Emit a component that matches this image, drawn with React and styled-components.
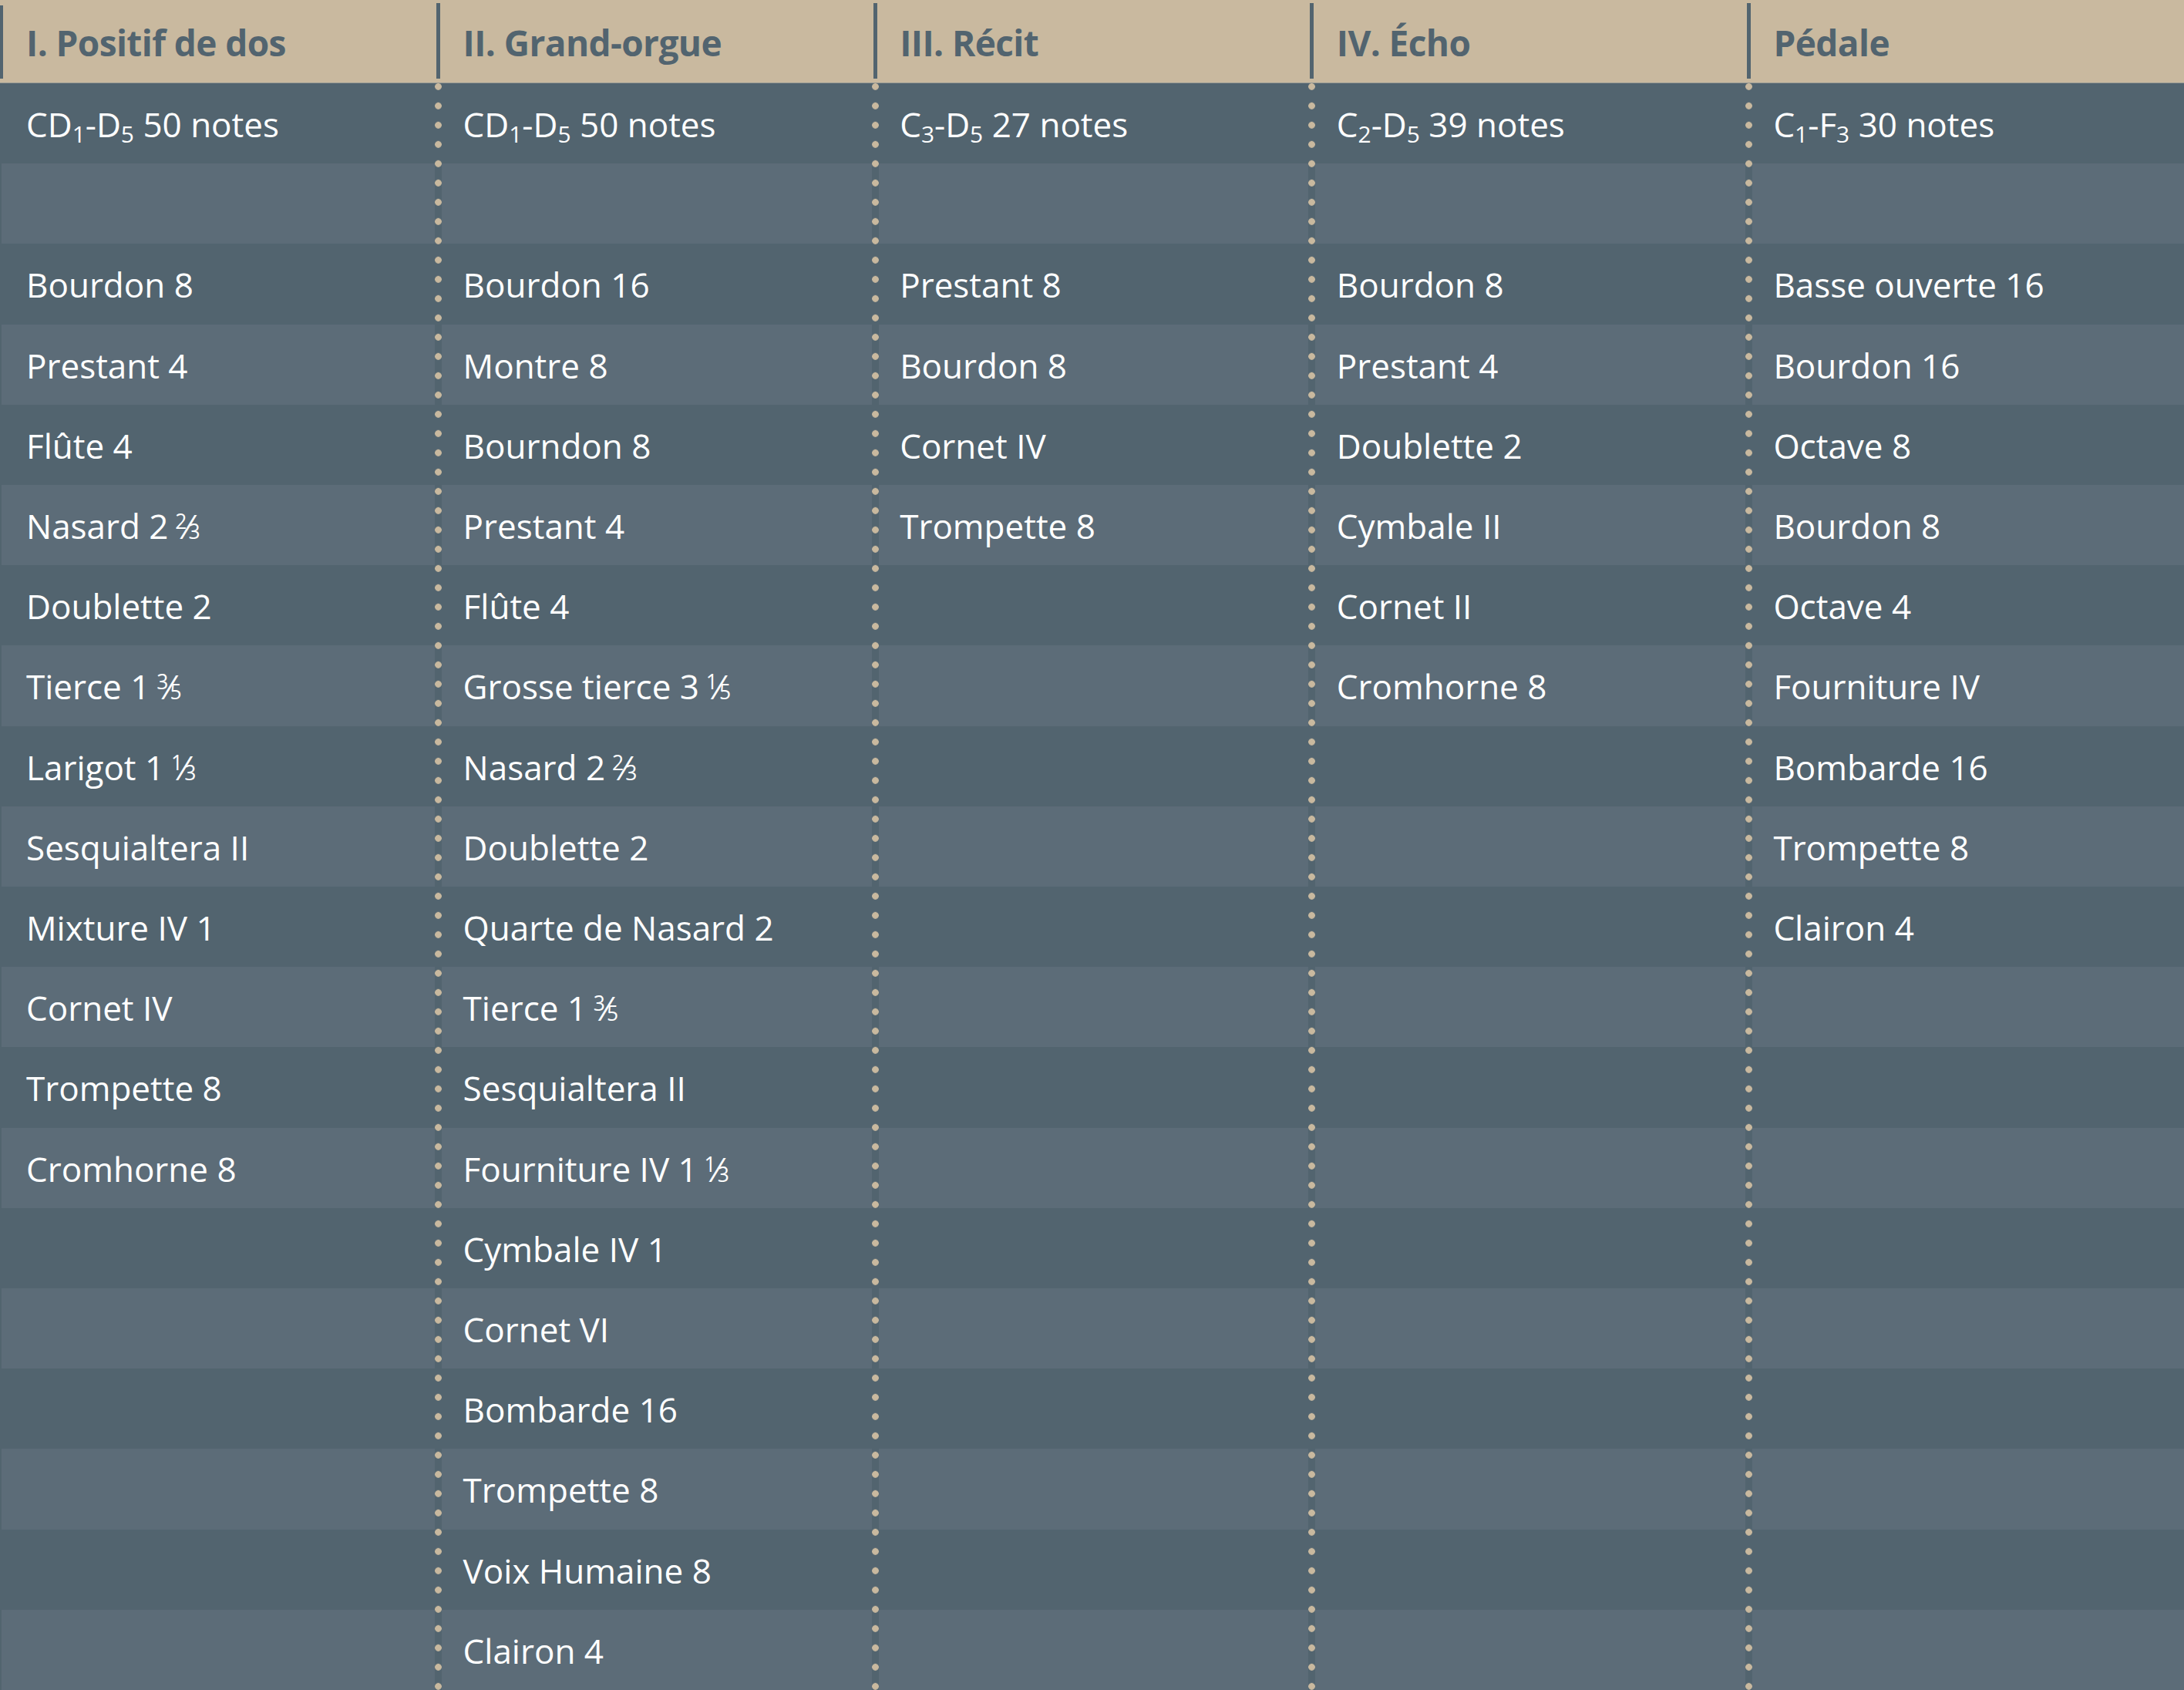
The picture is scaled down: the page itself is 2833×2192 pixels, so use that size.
import React from 'react';
import styled, { createGlobalStyle, css } from 'styled-components';

const GlobalStyle = createGlobalStyle`
  html, body {
    margin: 0;
    padding: 0;
    background: #52646f;
  }
  body {
    font-family: "Open Sans", "Noto Sans", "DejaVu Sans", sans-serif;
  }
`;

const TAN = '#c9b99f';
const DARK = '#52646f';
const LIGHT = '#5c6c78';

const Table = styled.div`
  display: grid;
  grid-template-columns: repeat(5, 1fr);
  height: 100vh;
  background: ${DARK};
  overflow: hidden;
`;

const Column = styled.div`
  position: relative;
  display: grid;
  grid-template-rows: 108px repeat(20, 1fr);
  min-width: 0;

  &::after {
    content: '';
    position: absolute;
    top: 108px;
    bottom: 0;
    z-index: 1;
    background-color: ${DARK};
    ${(p) =>
      p.$first
        ? css`
            left: 0;
            width: 2px;
          `
        : css`
            left: -2.5px;
            width: 9px;
            background-image: radial-gradient(circle at center, ${TAN} 4px, rgba(201, 185, 159, 0) 4.7px);
            background-size: 9px 25px;
            background-repeat: repeat-y;
            background-position: 0 -8.2px;
          `}
  }
`;

const HeaderCell = styled.div`
  position: relative;
  box-sizing: border-box;
  display: flex;
  align-items: center;
  padding-left: 34px;
  background: ${TAN};
  border-bottom: 1px solid #9a9c96;
  color: ${DARK};
  font-size: 46px;
  font-weight: 700;
  letter-spacing: -0.6px;
  line-height: 1;
  white-space: nowrap;

  &::before {
    content: '';
    position: absolute;
    background: ${DARK};
    ${(p) =>
      p.$first
        ? css`
            left: 0;
            width: 4px;
            top: 7px;
            bottom: 5px;
          `
        : css`
            left: -0.5px;
            width: 5px;
            top: 4px;
            bottom: 5px;
          `}
  }
`;

const HeaderLabel = styled.span`
  display: block;
  padding-top: 2px;
`;

const Cell = styled.div`
  display: flex;
  align-items: center;
  padding-left: 34px;
  background: ${(p) => (p.$alt ? LIGHT : DARK)};
  color: #ffffff;
  font-size: 44px;
  font-weight: 400;
  line-height: 1;
  white-space: nowrap;
  min-width: 0;
`;

const Label = styled.span`
  display: block;
  line-height: 1;
  padding-top: 2px;
`;

const Sub = styled.span`
  font-size: 0.68em;
  vertical-align: -0.24em;
  line-height: 0;
`;

const Frac = styled.span`
  margin-left: 0.2em;
`;

const Num = styled.span`
  font-size: 0.6em;
  vertical-align: 0.5em;
`;

const Slash = styled.span`
  margin: 0 -0.06em 0 -0.02em;
`;

const Den = styled.span`
  font-size: 0.6em;
`;

const columns = [
  {
    title: 'I. Positif de dos',
    range: 'CD_1-D_5 50 notes',
    stops: [
      'Bourdon 8',
      'Prestant 4',
      'Flûte 4',
      'Nasard 2 2/3',
      'Doublette 2',
      'Tierce 1 3/5',
      'Larigot 1 1/3',
      'Sesquialtera II',
      'Mixture IV 1',
      'Cornet IV',
      'Trompette 8',
      'Cromhorne 8',
    ],
  },
  {
    title: 'II. Grand-orgue',
    range: 'CD_1-D_5 50 notes',
    stops: [
      'Bourdon 16',
      'Montre 8',
      'Bourndon 8',
      'Prestant 4',
      'Flûte 4',
      'Grosse tierce 3 1/5',
      'Nasard 2 2/3',
      'Doublette 2',
      'Quarte de Nasard 2',
      'Tierce 1 3/5',
      'Sesquialtera II',
      'Fourniture IV 1 1/3',
      'Cymbale IV 1',
      'Cornet VI',
      'Bombarde 16',
      'Trompette 8',
      'Voix Humaine 8',
      'Clairon 4',
    ],
  },
  {
    title: 'III. Récit',
    range: 'C_3-D_5 27 notes',
    stops: ['Prestant 8', 'Bourdon 8', 'Cornet IV', 'Trompette 8'],
  },
  {
    title: 'IV. Écho',
    range: 'C_2-D_5 39 notes',
    stops: ['Bourdon 8', 'Prestant 4', 'Doublette 2', 'Cymbale II', 'Cornet II', 'Cromhorne 8'],
  },
  {
    title: 'Pédale',
    range: 'C_1-F_3 30 notes',
    stops: [
      'Basse ouverte 16',
      'Bourdon 16',
      'Octave 8',
      'Bourdon 8',
      'Octave 4',
      'Fourniture IV',
      'Bombarde 16',
      'Trompette 8',
      'Clairon 4',
    ],
  },
];

const ROWS = 20;

function Range({ text }) {
  const parts = text.split(/_(\d)/);
  return (
    <Label>
      {parts.map((part, i) => (i % 2 === 1 ? <Sub key={i}>{part}</Sub> : <React.Fragment key={i}>{part}</React.Fragment>))}
    </Label>
  );
}

function Stop({ text }) {
  const m = text.match(/^(.*?) (\d)\/(\d)$/);
  if (!m) return <Label>{text}</Label>;
  return (
    <Label>
      {m[1]}
      <Frac>
        <Num>{m[2]}</Num>
        <Slash>⁄</Slash>
        <Den>{m[3]}</Den>
      </Frac>
    </Label>
  );
}

export default function App() {
  return (
    <>
      <GlobalStyle />
      <Table>
        {columns.map((col, ci) => {
          const cells = [<Range key="r" text={col.range} />, null, ...col.stops.map((s) => <Stop key={s} text={s} />)];
          while (cells.length < ROWS) cells.push(null);
          return (
            <Column key={col.title} $first={ci === 0}>
              <HeaderCell $first={ci === 0}>
                <HeaderLabel>{col.title}</HeaderLabel>
              </HeaderCell>
              {cells.map((content, ri) => (
                <Cell key={ri} $alt={ri % 2 === 1}>
                  {content}
                </Cell>
              ))}
            </Column>
          );
        })}
      </Table>
    </>
  );
}
